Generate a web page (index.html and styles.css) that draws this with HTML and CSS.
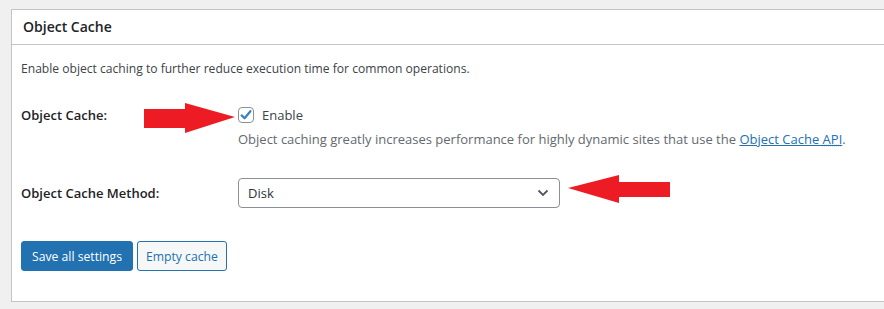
FILE: index.html
```html
<!doctype html>
<html lang="en">
<head>
    <meta charset="utf-8"/>
    <title>Object Cache</title>
    <link rel="stylesheet" href="styles.css">
</head>
<body>
<div class="wrap">
    <div class="panel">
        <h2 class="panel-head">Object Cache</h2>
        <div class="panel-body">
            <p class="intro">Enable object caching to further reduce execution time for common operations.</p>

            <div class="row row-check">
                <div class="label">Object Cache:</div>
                <div class="field">
                    <label class="check-line">
                        <span class="checkbox">
                            <svg width="14" height="14" viewBox="0 0 14 14"><path d="M2.6 7.4 L5.6 10.3 L11.4 3.2" fill="none" stroke="#3582c4" stroke-width="2.2" stroke-linecap="round" stroke-linejoin="round"/></svg>
                        </span>
                        Enable
                    </label>
                    <p class="desc">Object caching greatly increases performance for highly dynamic sites that use the <a href="#">Object Cache <abbr>API</abbr></a>.</p>
                </div>
            </div>

            <div class="row row-select">
                <div class="label">Object Cache Method:</div>
                <div class="field">
                    <div class="select">
                        <span>Disk</span>
                        <svg width="12" height="8" viewBox="0 0 12 8"><path d="M1.5 1.5 L6 6 L10.5 1.5" fill="none" stroke="#50575e" stroke-width="1.8"/></svg>
                    </div>
                </div>
            </div>

            <div class="buttons">
                <button class="btn btn-primary">Save all settings</button>
                <button class="btn btn-secondary">Empty cache</button>
            </div>
        </div>

        <!-- red arrows drawn over the form -->
        <svg class="arrow arrow-right" width="94" height="34" viewBox="0 0 94 34">
            <polygon points="1,6 42,6 42,0 92,14 42,30 42,25 1,25" fill="#ed1c24"/>
        </svg>
        <svg class="arrow arrow-left" width="106" height="32" viewBox="0 0 106 32">
            <polygon points="1,13 52,0 52,7 103,7 103,22 52,22 52,28" fill="#ed1c24"/>
        </svg>
    </div>
</div>
</body>
</html>
```

FILE: styles.css
```css
body, h2, p {
    margin: 0;
    padding: 0;
}

body {
    background: #f0f0f1;
    font-family: "Open Sans", "Noto Sans", sans-serif;
    font-size: 13px;
    color: #3c434a;
}

.wrap {
    padding: 9px 0 0 11px;
    overflow: hidden;
}

.panel {
    position: relative;
    width: 900px;
    height: 291px;
    background: #fff;
    border: 1px solid #c3c4c7;
}

.panel-head {
    height: 34px;
    line-height: 34px;
    padding: 0 11px;
    border-bottom: 1px solid #c3c4c7;
    font-size: 14px;
    font-weight: 600;
    color: #1d2327;
}

.panel-body {
    padding: 0 9px;
}

.intro {
    margin-top: 14px;
    line-height: 19px;
    font-size: 12.1px;
}

.row {
    display: flex;
}

.label {
    width: 217px;
    flex: none;
    font-weight: 600;
    color: #1d2327;
}

.row-check {
    margin-top: 27px;
}

.row-check .label {
    line-height: 20px;
}

.check-line {
    display: flex;
    align-items: center;
    gap: 8px;
    height: 20px;
}

.checkbox {
    width: 14px;
    height: 14px;
    border: 1px solid #8c8f94;
    border-radius: 4px;
    background: #fff;
    display: flex;
    align-items: center;
    justify-content: center;
}

.desc {
    margin-top: 5px;
    line-height: 19px;
    color: #646970;
}

.desc a {
    color: #2271b1;
}

.desc abbr {
    text-decoration: underline dotted;
}

.row-select {
    margin-top: 29px;
    align-items: center;
}

.select {
    width: 301px;
    height: 28px;
    padding: 0 10px 0 9px;
    border: 1px solid #8c8f94;
    border-radius: 4px;
    display: flex;
    align-items: center;
    justify-content: space-between;
    color: #2c3338;
}

.buttons {
    margin-top: 33px;
    display: flex;
    gap: 4px;
}

.btn {
    height: 30px;
    padding: 0 10px;
    border-radius: 3px;
    font-family: inherit;
    font-size: 12.2px;
    border: 1px solid #2271b1;
}

.btn-primary {
    background: #2271b1;
    color: #fff;
}

.btn-secondary {
    padding: 0 8px;
    background: #f6f7f7;
    color: #2271b1;
}

.arrow {
    position: absolute;
}

.arrow-right {
    left: 131px;
    top: 93px;
}

.arrow-left {
    left: 555px;
    top: 165px;
}
```
